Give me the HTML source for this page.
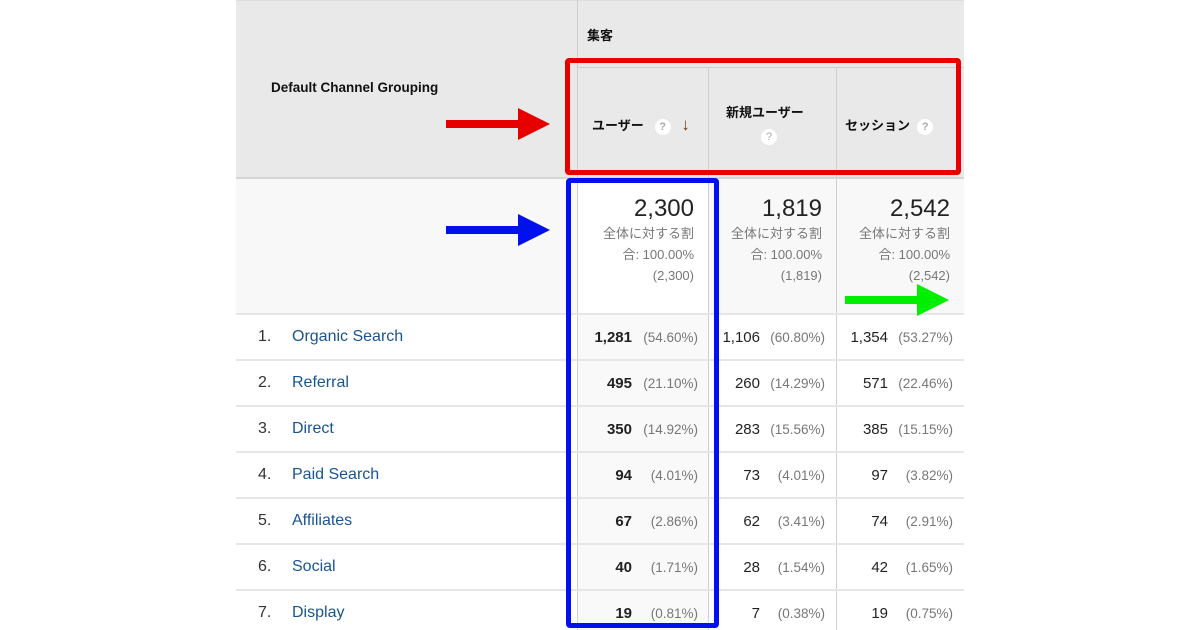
<!DOCTYPE html><html><head><meta charset="utf-8"><style>
body{margin:0;width:1200px;height:630px;background:#fff;position:relative;overflow:hidden;font-family:"Liberation Sans","Noto Sans CJK JP",sans-serif;}
.a{position:absolute}
.hd{left:236px;top:0;width:728px;height:178px;background:#e9e9e9;border-top:1px solid #ddd}
.v{position:absolute;width:1px;background:#cfcfcf}
.h{position:absolute;height:2px;background:#e6e6e6}
.q{display:inline-block;width:16px;height:16px;border-radius:50%;background:#fff;color:#aaa;font-size:11px;text-align:center;line-height:16px;vertical-align:middle}
.big{font-size:24px;color:#222;text-align:right}
.sm{font-size:13px;color:#777;text-align:right;line-height:21px}
.num{font-size:15px;color:#222;text-align:right}
.pc{font-size:13.5px;color:#777}
.lab{font-size:16px;color:#1a5490}
.idx{font-size:16px;color:#333}
</style></head><body>
<div class="a hd"></div>
<div class="a" style="left:236px;top:178px;width:728px;height:136px;background:#f8f8f8"></div>
<div class="a" style="left:578px;top:178px;width:130px;height:136px;background:#fff"></div>
<div class="a" style="left:578px;top:314px;width:130px;height:316px;background:#f9f9f9"></div>
<div class="v" style="left:577px;top:0;height:630px"></div>
<div class="v" style="left:708px;top:68px;height:562px"></div>
<div class="v" style="left:836px;top:68px;height:562px"></div>
<div class="a" style="left:578px;top:67px;width:386px;height:1px;background:#cfcfcf"></div>
<div class="a" style="left:236px;top:177px;width:728px;height:2px;background:#d6d6d6"></div>
<div class="h" style="left:236px;top:313px;width:728px"></div>
<div class="h" style="left:236px;top:359px;width:728px"></div>
<div class="h" style="left:236px;top:405px;width:728px"></div>
<div class="h" style="left:236px;top:451px;width:728px"></div>
<div class="h" style="left:236px;top:497px;width:728px"></div>
<div class="h" style="left:236px;top:543px;width:728px"></div>
<div class="h" style="left:236px;top:589px;width:728px"></div>

<div class="a" style="left:271px;top:80px;font-size:13.5px;font-weight:bold;color:#111">Default Channel Grouping</div>
<div class="a" style="left:587px;top:25px;font-size:13px;font-weight:bold;color:#111">集客</div>
<div class="a" style="left:592px;top:115px;font-size:13px;font-weight:bold;color:#111">ユーザー&nbsp;&nbsp;&nbsp;<span class="q">?</span>&nbsp;&nbsp;&nbsp;<span style="color:#7a3d10;font-size:17px;font-weight:bold">↓</span></div>
<div class="a" style="left:726px;top:102px;font-size:13px;font-weight:bold;color:#111">新規ユーザー</div>
<div class="a" style="left:761px;top:128px"><span class="q">?</span></div>
<div class="a" style="left:845px;top:115px;font-size:13px;font-weight:bold;color:#111">セッション&nbsp;&nbsp;<span class="q">?</span></div>

<div class="a" style="left:580px;top:195px;width:114px"><div class="big">2,300</div><div class="sm">全体に対する割<br>合: 100.00%<br>(2,300)</div></div>
<div class="a" style="left:712px;top:195px;width:110px"><div class="big">1,819</div><div class="sm">全体に対する割<br>合: 100.00%<br>(1,819)</div></div>
<div class="a" style="left:840px;top:195px;width:110px"><div class="big">2,542</div><div class="sm">全体に対する割<br>合: 100.00%<br>(2,542)</div></div>

<div id="rows"></div>
<script>
var d=[["Organic Search","1,281","(54.60%)","1,106","(60.80%)","1,354","(53.27%)"],["Referral","495","(21.10%)","260","(14.29%)","571","(22.46%)"],["Direct","350","(14.92%)","283","(15.56%)","385","(15.15%)"],["Paid Search","94","(4.01%)","73","(4.01%)","97","(3.82%)"],["Affiliates","67","(2.86%)","62","(3.41%)","74","(2.91%)"],["Social","40","(1.71%)","28","(1.54%)","42","(1.65%)"],["Display","19","(0.81%)","7","(0.38%)","19","(0.75%)"]];
var h="";d.forEach(function(r,i){var y=328+i*46;
h+='<div class="a idx" style="left:258px;top:'+y+'px">'+(i+1)+'.</div><div class="a lab" style="left:292px;top:'+y+'px">'+r[0]+'</div>';
var cols=[[632,698,true],[760,825,false],[888,953,false]];
cols.forEach(function(c,j){h+='<div class="a num" style="right:'+(1200-c[0])+'px;top:'+(y+1)+'px;'+(c[2]?'font-weight:bold':'')+'">'+r[1+j*2]+'</div><div class="a pc" style="right:'+(1200-c[1])+'px;top:'+(y+2)+'px">'+r[2+j*2]+'</div>';});});
document.getElementById("rows").innerHTML=h;
</script>

<div class="a" style="left:565px;top:58px;width:386px;height:107px;border:5px solid #e60000;border-radius:4px"></div>
<div class="a" style="left:566px;top:178px;width:143px;height:440px;border:5px solid #0010ee;border-radius:4px"></div>
<svg class="a" style="left:0;top:0" width="1200" height="630">
<polygon points="446,120 518,120 518,108 550,124 518,140 518,128 446,128" fill="#e60000"/>
<polygon points="446,226 518,226 518,214 550,230 518,246 518,234 446,234" fill="#0010ee"/>
<polygon points="845,296 917,296 917,284 949,300 917,316 917,304 845,304" fill="#00ee00"/>
</svg>
</body></html>
